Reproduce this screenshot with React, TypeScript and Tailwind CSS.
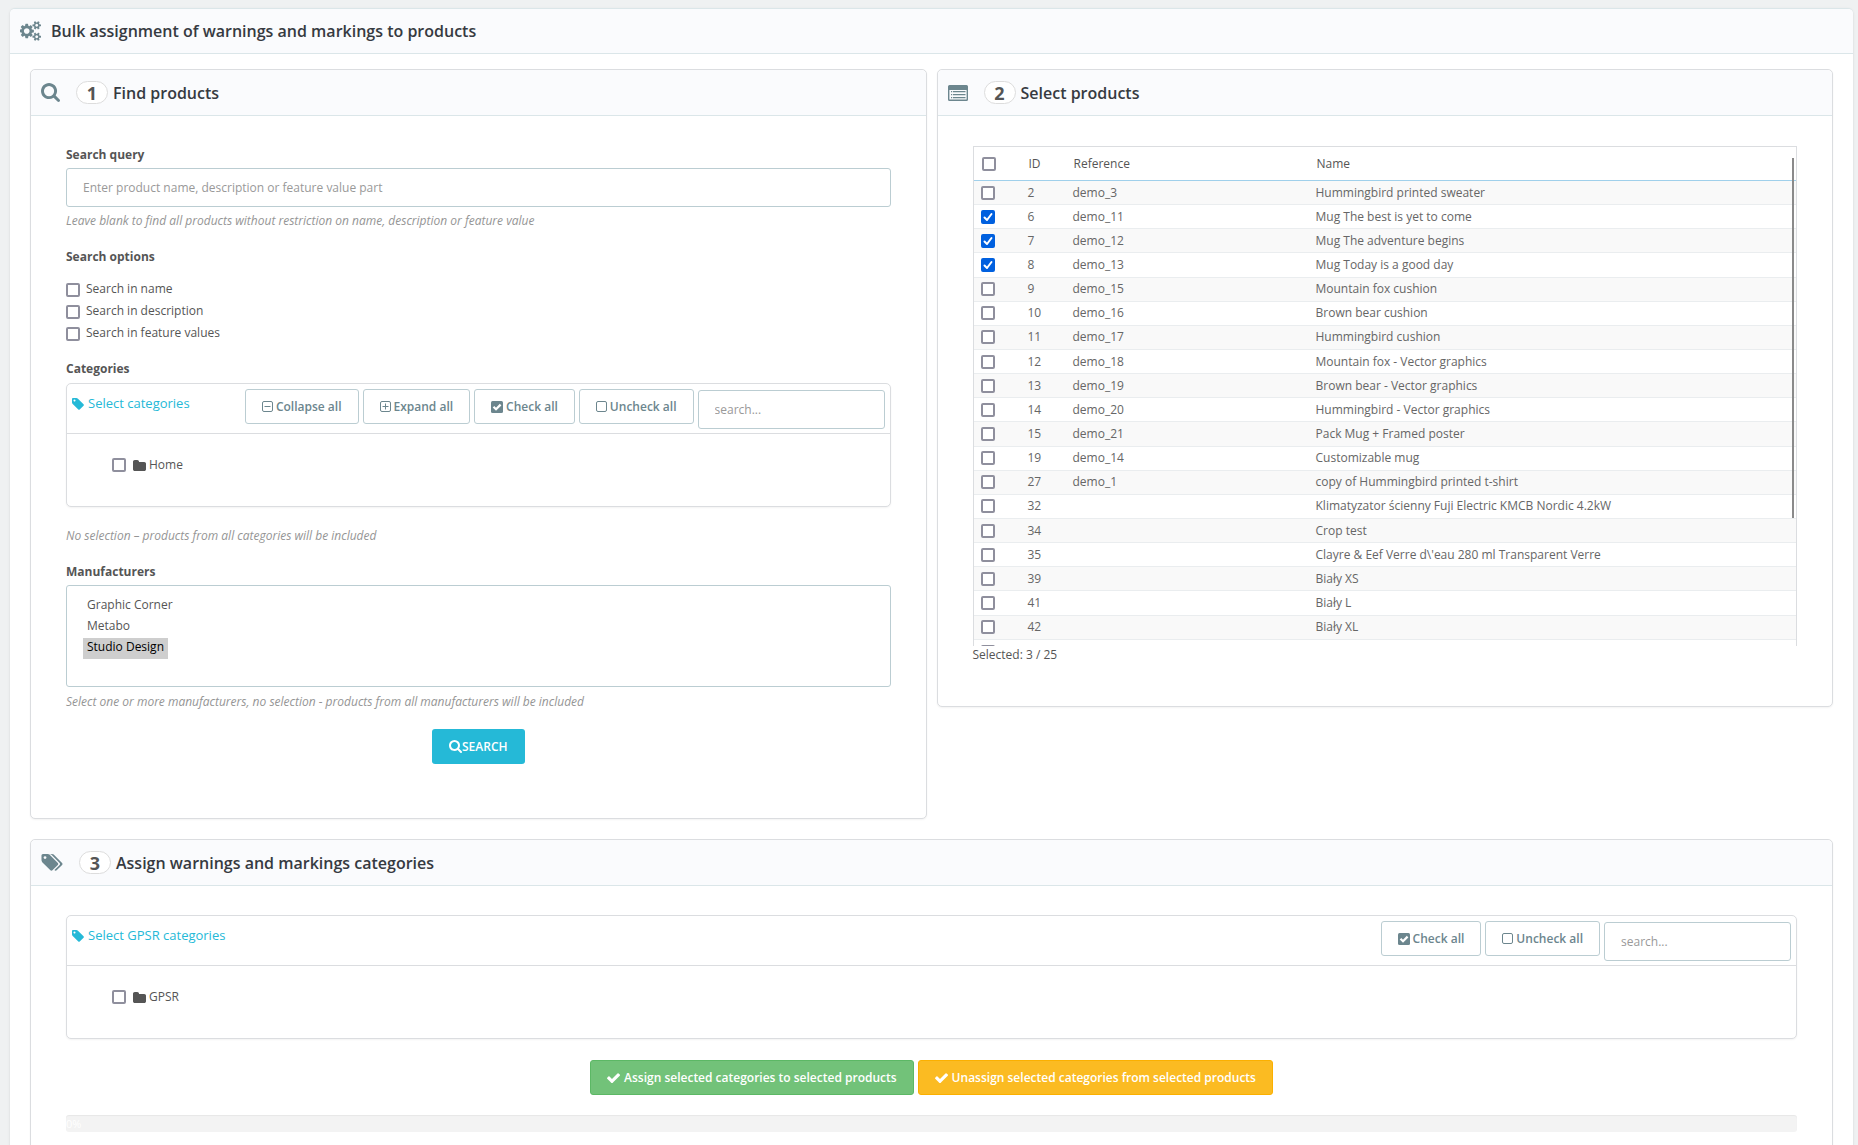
import type { ReactNode } from 'react'
import { useState } from 'react'

interface IconProps {
  readonly className?: string
}

interface Product {
  readonly id: number
  readonly reference: string
  readonly name: string
}

const PRODUCTS_TOTAL = 25

const PRODUCTS: Product[] = [
  { id: 2, reference: 'demo_3', name: 'Hummingbird printed sweater' },
  { id: 6, reference: 'demo_11', name: 'Mug The best is yet to come' },
  { id: 7, reference: 'demo_12', name: 'Mug The adventure begins' },
  { id: 8, reference: 'demo_13', name: 'Mug Today is a good day' },
  { id: 9, reference: 'demo_15', name: 'Mountain fox cushion' },
  { id: 10, reference: 'demo_16', name: 'Brown bear cushion' },
  { id: 11, reference: 'demo_17', name: 'Hummingbird cushion' },
  { id: 12, reference: 'demo_18', name: 'Mountain fox - Vector graphics' },
  { id: 13, reference: 'demo_19', name: 'Brown bear - Vector graphics' },
  { id: 14, reference: 'demo_20', name: 'Hummingbird - Vector graphics' },
  { id: 15, reference: 'demo_21', name: 'Pack Mug + Framed poster' },
  { id: 19, reference: 'demo_14', name: 'Customizable mug' },
  { id: 27, reference: 'demo_1', name: 'copy of Hummingbird printed t-shirt' },
  { id: 32, reference: '', name: 'Klimatyzator ścienny Fuji Electric KMCB Nordic 4.2kW' },
  { id: 34, reference: '', name: 'Crop test' },
  { id: 35, reference: '', name: "Clayre & Eef Verre d\\'eau 280 ml Transparent Verre" },
  { id: 39, reference: '', name: 'Biały XS' },
  { id: 41, reference: '', name: 'Biały L' },
  { id: 42, reference: '', name: 'Biały XL' },
]

const SEARCH_OPTIONS = ['Search in name', 'Search in description', 'Search in feature values']

function CogsIcon({ className }: IconProps) {
  return (
    <svg viewBox="0 0 1920 1792" fill="currentColor" className={className} aria-hidden="true">
      <path d="M832 896q0-106-75-181t-181-75-181 75-75 181 75 181 181 75 181-75 75-181zm768 512q0-52-38-90t-90-38-90 38-38 90q0 53 37.5 90.5t90.5 37.5 90.5-37.5 37.5-90.5zm0-1024q0-52-38-90t-90-38-90 38-38 90q0 53 37.5 90.5t90.5 37.5 90.5-37.5 37.5-90.5zm-384 421v185q0 10-7 19.5t-16 10.5l-155 24q-11 35-32 76 34 48 90 115 7 11 7 20 0 12-7 19-23 30-82.5 89.5t-78.5 59.5q-11 0-21-7l-115-90q-37 19-77 31-11 108-23 155-7 24-30 24h-186q-11 0-20-7.5t-10-17.5l-23-153q-34-10-75-31l-118 89q-7 7-20 7-11 0-21-8-144-133-144-160 0-9 7-19 10-14 41-53t47-61q-23-44-35-82l-152-24q-10-1-17-9.5t-7-19.5v-185q0-10 7-19.5t16-10.5l155-24q11-35 32-76-34-48-90-115-7-11-7-20 0-12 7-20 22-30 82-89t79-59q11 0 21 7l115 90q34-18 77-32 11-108 23-154 7-24 30-24h186q11 0 20 7.5t10 17.5l23 153q34 10 75 31l118-89q8-7 20-7 11 0 21 8 144 133 144 160 0 8-7 19-12 16-42 54t-45 60q23 48 34 82l152 23q10 2 17 10.5t7 19.5zm640 533v140q0 16-149 31-12 27-30 52 51 113 51 138 0 4-4 7-122 71-124 71-8 0-46-47t-52-68q-20 2-30 2t-30-2q-14 21-52 68t-46 47q-2 0-124-71-4-3-4-7 0-25 51-138-18-25-30-52-149-15-149-31v-140q0-16 149-31 13-29 30-52-51-113-51-138 0-4 4-7 4-2 35-20t59-34 30-16q8 0 46 46.5t52 67.5q20-2 30-2t30 2q51-71 92-112l6-2q4 0 124 70 4 3 4 7 0 25-51 138 17 23 30 52 149 15 149 31zm0-1024v140q0 16-149 31-12 27-30 52 51 113 51 138 0 4-4 7-122 71-124 71-8 0-46-47t-52-68q-20 2-30 2t-30-2q-14 21-52 68t-46 47q-2 0-124-71-4-3-4-7 0-25 51-138-18-25-30-52-149-15-149-31v-140q0-16 149-31 13-29 30-52-51-113-51-138 0-4 4-7 4-2 35-20t59-34 30-16q8 0 46 46.5t52 67.5q20-2 30-2t30 2q51-71 92-112l6-2q4 0 124 70 4 3 4 7 0 25-51 138 17 23 30 52 149 15 149 31z" />
    </svg>
  )
}

function SearchIcon({ className }: IconProps) {
  return (
    <svg viewBox="64 128 1664 1664" fill="currentColor" className={className} aria-hidden="true">
      <path d="M1216 832q0-185-131.500-316.500t-316.500-131.500-316.500 131.500-131.500 316.500 131.500 316.500 316.500 131.500 316.500-131.500 131.500-316.500zm512 832q0 52-38 90t-90 38q-54 0-90-38l-343-342q-179 124-399 124-143 0-273.500-55.500t-225-150-150-225-55.500-273.500 55.500-273.500 150-225 225-150 273.500-55.500 273.500 55.500 225 150 150 225 55.500 273.500q0 220-124 399l343 343q37 37 37 90z" />
    </svg>
  )
}

function ListIcon({ className }: IconProps) {
  return (
    <svg viewBox="0 0 20 16" fill="currentColor" className={className} aria-hidden="true">
      <path
        fillRule="evenodd"
        d="M1.500 0h17A1.500 1.500 0 0 1 20 1.500v13a1.500 1.500 0 0 1-1.500 1.500h-17A1.500 1.500 0 0 1 0 14.500v-13A1.500 1.500 0 0 1 1.500 0zM1.400 5v9.200q0 .4.400.4h16.400q.4 0 .4-.4V5z"
      />
      <path d="M3 6h1.200v1.200H3zM3 9h1.200v1.200H3zM3 12h1.200v1.200H3zM5 6h12.500v1.200H5zM5 9h12.500v1.200H5zM5 12h12.500v1.200H5z" />
    </svg>
  )
}

function TagIcon({ className }: IconProps) {
  return (
    <svg viewBox="128 128 1536 1536" fill="currentColor" className={className} aria-hidden="true">
      <path d="M576 448q0-53-37.500-90.500t-90.500-37.500-90.500 37.500-37.500 90.500 37.500 90.500 90.500 37.500 90.500-37.500 37.500-90.500zm1067 576q0 53-37 90l-491 492q-39 37-91 37-53 0-90-37l-715-716q-38-37-64.500-101t-26.500-117v-416q0-52 38-90t90-38h416q53 0 117 26.500t102 64.500l715 714q37 39 37 91z" />
    </svg>
  )
}

function TagsIcon({ className }: IconProps) {
  return (
    <svg viewBox="0 128 1900 1536" fill="currentColor" className={className} aria-hidden="true">
      <path d="M448 448q0-53-37.500-90.500t-90.500-37.500-90.500 37.500-37.500 90.500 37.500 90.500 90.500 37.500 90.500-37.500 37.500-90.500zm1067 576q0 53-37 90l-491 492q-39 37-91 37-53 0-90-37l-715-716q-38-37-64.500-101t-26.500-117v-416q0-52 38-90t90-38h416q53 0 117 26.500t102 64.500l715 714q37 39 37 91zm384 0q0 53-37 90l-491 492q-39 37-91 37-36 0-59-14t-53-45l470-470q37-37 37-90 0-52-37-91l-715-714q-38-38-102-64.500t-117-26.500h224q53 0 117 26.500t102 64.500l715 714q37 39 37 91z" />
    </svg>
  )
}

function FolderIcon({ className }: IconProps) {
  return (
    <svg viewBox="64 128 1664 1408" fill="currentColor" className={className} aria-hidden="true">
      <path d="M1728 608v704q0 92-66 158t-158 66h-1216q-92 0-158-66t-66-158v-960q0-92 66-158t158-66h320q92 0 158 66t66 158v32h672q92 0 158 66t66 158z" />
    </svg>
  )
}

function CheckIcon({ className }: IconProps) {
  return (
    <svg viewBox="121 310 1550 1188" fill="currentColor" className={className} aria-hidden="true">
      <path d="M1671 566q0 40-28 68l-724 724-136 136q-28 28-68 28t-68-28l-136-136-362-362q-28-28-28-68t28-68l136-136q28-28 68-28t68 28l294 295 656-657q28-28 68-28t68 28l136 136q28 28 28 68z" />
    </svg>
  )
}

function CheckSquareIcon({ className }: IconProps) {
  return (
    <svg viewBox="0 0 12 12" fill="none" className={className} aria-hidden="true">
      <rect width="12" height="12" rx="1.5" fill="currentColor" />
      <path d="M2.500 5.800L5 8.200l4.600-4.600" stroke="white" strokeWidth="2.200" />
    </svg>
  )
}

// Outlined square, with an optional minus or plus in it
function SquareIcon({ sign, className }: IconProps & { readonly sign?: 'minus' | 'plus' }) {
  return (
    <svg viewBox="0 0 11 12" fill="none" stroke="currentColor" className={className} aria-hidden="true">
      <rect x="0.5" y="0.5" width="10" height="10" rx="1.5" />
      {sign && <path d="M2.500 5.500h6" />}
      {sign === 'plus' && <path d="M5.500 2.500v6" />}
    </svg>
  )
}

interface CheckboxProps {
  readonly id: string
  readonly label?: string
  readonly checked?: boolean
  readonly onChange?: () => void
}

function Checkbox({ id, label, checked, onChange }: CheckboxProps) {
  return (
    <span className="relative inline-flex size-3.5 shrink-0">
      <input
        id={id}
        type="checkbox"
        aria-label={label}
        checked={checked}
        onChange={onChange}
        className="peer size-3.5 appearance-none rounded-xs border-2 border-[#8f8f9d] bg-white checked:border-[#0060df] checked:bg-[#0060df]"
      />
      <svg
        viewBox="0 0 14 14"
        fill="none"
        stroke="white"
        strokeWidth="2"
        strokeLinecap="round"
        strokeLinejoin="round"
        className="pointer-events-none absolute inset-0 hidden size-3.5 peer-checked:block"
        aria-hidden="true"
      >
        <path d="M3.500 7.500l2.500 2.500 4.500-6" />
      </svg>
    </span>
  )
}

interface PanelProps {
  readonly step: number
  readonly title: string
  readonly icon: ReactNode
  readonly children: ReactNode
  readonly className?: string
}

function Panel({ step, title, icon, children, className = '' }: PanelProps) {
  return (
    <section className={`rounded-[5px] border border-[#dbdde0] bg-white shadow-xs ${className}`}>
      <header className="flex h-[46px] items-center rounded-t-[5px] border-b border-[#dbe6e9] bg-[#fafbfd] pl-2.5 text-[#6c868e]">
        {icon}
        <span className="mr-[5px] ml-4 flex h-[23px] w-8 items-center justify-center rounded-full border border-[#dddddd] bg-white text-lg font-bold text-[#555555]">
          {step}
        </span>
        <h2 className="text-base font-semibold text-[#363a41]">{title}</h2>
      </header>
      {children}
    </section>
  )
}

interface TreeProps {
  readonly id: string
  readonly title: string
  readonly root: string
  readonly expandable?: boolean
}

const TREE_BUTTON =
  'flex h-[35px] items-center gap-[3px] rounded-[3px] border border-[#bbcdd2] bg-white px-4 text-xs font-semibold text-[#6c868e]'

function Tree({ id, title, root, expandable }: TreeProps) {
  return (
    <div className="rounded-[5px] border border-[#dbdde0] bg-white shadow-xs">
      <div className="flex h-[50px] items-start justify-between border-b border-[#dbdde0] px-[5px] pt-[5px]">
        <a href="#" className="flex h-[30px] items-center gap-1 text-[13px] text-[#25b9d7]">
          <TagIcon className="size-3" />
          {title}
        </a>
        <div className="flex items-start gap-1">
          {expandable && (
            <>
              <button type="button" className={TREE_BUTTON}>
                <SquareIcon sign="minus" className="h-3 w-[11px]" />
                Collapse all
              </button>
              <button type="button" className={TREE_BUTTON}>
                <SquareIcon sign="plus" className="h-3 w-[11px]" />
                Expand all
              </button>
            </>
          )}
          <button type="button" className={TREE_BUTTON}>
            <CheckSquareIcon className="size-3" />
            Check all
          </button>
          <button type="button" className={TREE_BUTTON}>
            <SquareIcon className="h-3 w-[11px]" />
            Uncheck all
          </button>
          <input
            type="text"
            aria-label={`Search in ${root}`}
            placeholder="search..."
            className="mt-px h-[39px] w-[187px] rounded-[3px] border border-[#bbcdd2] bg-white px-4 text-xs placeholder:text-[#999999]"
          />
        </div>
      </div>
      <div className="flex h-[72px] items-start pt-[22px] pl-[45px]">
        <div className="flex h-[18px] items-center">
          <Checkbox id={id} />
          <label htmlFor={id} className="flex items-center gap-[3px] pl-[7px]">
            <FolderIcon className="h-[11px] w-[13px]" />
            {root}
          </label>
        </div>
      </div>
    </div>
  )
}

function FindProducts() {
  return (
    <Panel step={1} title="Find products" icon={<SearchIcon className="size-[19px]" />} className="h-[750px]">
      <form className="px-[35px] pt-[30px]" onSubmit={(event) => event.preventDefault()}>
        <label htmlFor="query" className="block h-[22px] leading-[18px] font-bold">
          Search query
        </label>
        <input
          id="query"
          type="text"
          placeholder="Enter product name, description or feature value part"
          className="block h-[39px] w-full rounded-[3px] border border-[#bbcdd2] bg-white px-4 text-xs placeholder:text-[#999999]"
        />
        <p className="mt-[5px] leading-[18px] text-[#959595] italic">
          Leave blank to find all products without restriction on name, description or feature value
        </p>
        <fieldset className="mt-[18px]">
          <legend className="leading-[18px] font-bold">Search options</legend>
          <div className="pt-3">
            {SEARCH_OPTIONS.map((option, index) => (
              <div key={option} className="flex h-[22px] items-end gap-1.5 pb-[3px]">
                <Checkbox id={`option-${index}`} />
                <label htmlFor={`option-${index}`} className="leading-4">
                  {option}
                </label>
              </div>
            ))}
          </div>
        </fieldset>
        <p className="mt-4 mb-[5px] leading-[18px] font-bold">Categories</p>
        <Tree id="tree-home" title="Select categories" root="Home" expandable />
        <p className="mt-5 leading-[18px] text-[#959595] italic">
          No selection – products from all categories will be included
        </p>
        <label htmlFor="manufacturers" className="mt-[18px] block h-[22px] leading-[18px] font-bold">
          Manufacturers
        </label>
        <select
          id="manufacturers"
          multiple
          defaultValue={['Studio Design']}
          className="block h-[102px] w-full overflow-hidden rounded-[3px] border border-[#bbcdd2] bg-white px-4 py-2.5 text-xs"
        >
          {['Graphic Corner', 'Metabo', 'Studio Design'].map((name) => (
            <option
              key={name}
              className="h-[21px] w-fit px-1 py-0 leading-[21px] checked:bg-[#cecece] checked:bg-linear-to-r checked:from-[#cecece] checked:to-[#cecece] checked:text-black"
            >
              {name}
            </option>
          ))}
        </select>
        <p className="mt-1.5 leading-[18px] text-[#959595] italic">
          Select one or more manufacturers, no selection - products from all manufacturers will be included
        </p>
        <button
          type="submit"
          className="mx-auto mt-[18px] flex h-[35px] items-center rounded-[3px] bg-[#25b9d7] px-[17px] text-xs font-semibold text-white uppercase"
        >
          <SearchIcon className="size-[13px]" />
          Search
        </button>
      </form>
    </Panel>
  )
}

function SelectProducts() {
  const [selected, setSelected] = useState<number[]>([6, 7, 8])

  const toggle = (id: number) =>
    setSelected(selected.includes(id) ? selected.filter((item) => item !== id) : [...selected, id])

  const toggleAll = () => setSelected(selected.length === PRODUCTS.length ? [] : PRODUCTS.map(({ id }) => id))

  return (
    <Panel step={2} title="Select products" icon={<ListIcon className="h-4 w-5" />} className="h-[638px]">
      <div className="px-[35px] pt-[30px]">
        <div className="relative">
          <div className="h-[500px] overflow-y-auto [scrollbar-width:none]">
            <table className="h-[519px] w-full table-fixed border-separate border-spacing-0 border border-[#dbdde0] text-left">
              <thead>
                <tr className="h-[34px] [&>th]:border-b [&>th]:border-[#a0d0eb] [&>th]:font-normal">
                  <th className="w-[46px] pl-2 align-middle">
                    <span className="flex">
                      <Checkbox
                        id="all"
                        label="Select all"
                        checked={selected.length === PRODUCTS.length}
                        onChange={toggleAll}
                      />
                    </span>
                  </th>
                  <th className="w-[45px] pl-[9px]">ID</th>
                  <th className="w-[243px] pl-[9px]">Reference</th>
                  <th className="pl-[9px]">Name</th>
                </tr>
              </thead>
              <tbody className="text-[#666666]">
                {PRODUCTS.map(({ id, reference, name }) => (
                  <tr key={id} className="h-6 odd:bg-[#f9f9f9] [&>td]:border-b [&>td]:border-[#eaedef] [&>td]:p-0">
                    <td>
                      <span className="flex pl-[7px]">
                        <Checkbox
                          id={`product-${id}`}
                          label={name}
                          checked={selected.includes(id)}
                          onChange={() => toggle(id)}
                        />
                      </span>
                    </td>
                    <td>
                      <span className="pl-2">{id}</span>
                    </td>
                    <td>
                      <span className="pl-2">{reference}</span>
                    </td>
                    <td>
                      <span className="pl-2">{name}</span>
                    </td>
                  </tr>
                ))}
                <tr className="h-6">
                  <td colSpan={4}>
                    <span className="flex pl-[7px]">
                      <Checkbox id="product-next" label="Next product" />
                    </span>
                  </td>
                </tr>
              </tbody>
            </table>
          </div>
          <div className="absolute top-3 right-[3px] h-[360px] w-0.5 bg-[#8a8a8a]" />
        </div>
        <p className="leading-[18px]">
          Selected: {selected.length} / {PRODUCTS_TOTAL}
        </p>
      </div>
    </Panel>
  )
}

function AssignCategories() {
  return (
    <Panel
      step={3}
      title="Assign warnings and markings categories"
      icon={<TagsIcon className="h-[17px] w-[22px]" />}
      className="mt-5 h-[360px]"
    >
      <div className="px-[35px] pt-[29px]">
        <Tree id="tree-gpsr" title="Select GPSR categories" root="GPSR" />
        <div className="mt-[21px] flex justify-center gap-1">
          <button
            type="button"
            className="flex h-[35px] items-center gap-1 rounded-[3px] border border-[#5cb865] bg-[#72c279] px-4 text-xs font-semibold text-white"
          >
            <CheckIcon className="h-2.5 w-[13px]" />
            Assign selected categories to selected products
          </button>
          <button
            type="button"
            className="flex h-[35px] items-center gap-1 rounded-[3px] border border-[#fbb000] bg-[#fbbb22] px-4 text-xs font-semibold text-white"
          >
            <CheckIcon className="h-2.5 w-[13px]" />
            Unassign selected categories from selected products
          </button>
        </div>
        <div
          role="progressbar"
          aria-label="Assignment progress"
          aria-valuenow={0}
          className="mt-5 h-[17px] rounded-[3px] bg-[#f3f3f3] text-[11px] leading-[17px] text-white inset-shadow-xs"
        >
          0%
        </div>
      </div>
    </Panel>
  )
}

export default function App() {
  return (
    <div className="h-screen overflow-hidden bg-[#eff1f2] pt-2 pr-[5px] pl-2.5 font-['Open_Sans','Noto_Sans',sans-serif] text-xs text-[#555555]">
      <main className="rounded-t-[5px] border-t border-[#dbe6e9] bg-white pb-5 shadow-sm">
        <header className="flex h-[45px] items-center gap-[9px] rounded-t-[5px] border-b border-[#dbe6e9] bg-[#fafbfd] pl-2.5">
          <CogsIcon className="h-5 w-[22px] text-[#6c868e]" />
          <h1 className="text-base font-semibold text-[#363a41]">
            Bulk assignment of warnings and markings to products
          </h1>
        </header>
        <div className="px-5 pt-[15px]">
          <div className="grid grid-cols-2 items-start gap-2.5">
            <FindProducts />
            <SelectProducts />
          </div>
          <AssignCategories />
        </div>
      </main>
    </div>
  )
}
